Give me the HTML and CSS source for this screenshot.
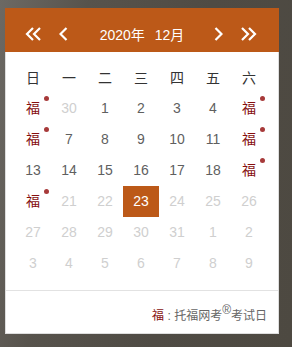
FILE: index.html
```html
<!DOCTYPE html>
<html lang="zh-CN">

<head>
    <meta charset="UTF-8">
    <title>考试日历</title>
    <link rel="stylesheet" href="styles.css">
</head>

<body>
    <div class="calendar">
        <div class="cal-head">
            <svg class="arrow-dbl" width="17" height="14" viewBox="0 0 17 14">
                <polyline points="8,1 2,7 8,13" />
                <polyline points="15,1 9,7 15,13" />
            </svg>
            <svg class="arrow-one prev" width="9" height="14" viewBox="0 0 9 14">
                <polyline points="7.5,1 1.5,7 7.5,13" />
            </svg>
            <div class="title"><span>2020年</span><span class="month">12月</span></div>
            <svg class="arrow-one next" width="9" height="14" viewBox="0 0 9 14">
                <polyline points="1.5,1 7.5,7 1.5,13" />
            </svg>
            <svg class="arrow-dbl" width="17" height="14" viewBox="0 0 17 14">
                <polyline points="2,1 8,7 2,13" />
                <polyline points="9,1 15,7 9,13" />
            </svg>
        </div>
        <div class="cal-body">
            <div class="week">
                <span>日</span><span>一</span><span>二</span><span>三</span><span>四</span><span>五</span><span>六</span>
            </div>
            <div class="days">
                <span class="fu">福</span><span class="other">30</span><span>1</span><span>2</span><span>3</span><span>4</span><span class="fu">福</span>
                <span class="fu">福</span><span>7</span><span>8</span><span>9</span><span>10</span><span>11</span><span class="fu">福</span>
                <span>13</span><span>14</span><span>15</span><span>16</span><span>17</span><span>18</span><span class="fu">福</span>
                <span class="fu">福</span><span class="other">21</span><span class="other">22</span><span class="today">23</span><span class="other">24</span><span class="other">25</span><span class="other">26</span>
                <span class="other">27</span><span class="other">28</span><span class="other">29</span><span class="other">30</span><span class="other">31</span><span class="other">1</span><span class="other">2</span>
                <span class="other">3</span><span class="other">4</span><span class="other">5</span><span class="other">6</span><span class="other">7</span><span class="other">8</span><span class="other">9</span>
            </div>
            <div class="cal-foot">
                <span class="fu-mark">福</span> : 托福网考<sup>®</sup>考试日
            </div>
        </div>
    </div>
</body>

</html>
```

FILE: styles.css
```css
body {
    margin: 0;
    height: 347px;
    font-family: "Liberation Sans", "Noto Sans CJK SC", sans-serif;
    background: linear-gradient(100deg, #6c6964 0%, #57534c 25%, #4f4b44 60%, #4d4941 100%);
    overflow: hidden;
}

.calendar {
    width: 274px;
    margin: 8px 0 0 5px;
}

.cal-head {
    display: flex;
    align-items: center;
    height: 44px;
    box-sizing: border-box;
    padding: 7px 22px 0 20px;
    background-color: #bc5918;
    color: #fff;
}

.cal-head svg polyline {
    fill: none;
    stroke: #fff;
    stroke-width: 2.2;
}

.arrow-dbl {
    flex: none;
}

.arrow-one {
    flex: none;
}

.prev {
    margin-left: 17px;
}

.next {
    margin-right: 17px;
}

.title {
    flex: 1;
    text-align: center;
    font-size: 14px;
    padding-left: 2px;
}

.month {
    margin-left: 10px;
}

.cal-body {
    background-color: #fff;
    border: 1px solid #dedede;
    border-top: none;
    padding-top: 11px;
}

.week,
.days {
    display: grid;
    grid-template-columns: repeat(7, 36px);
    padding: 0 11px 0 9px;
}

.week span {
    height: 30px;
    line-height: 30px;
    text-align: center;
    font-size: 14px;
    color: #333;
}

.days span {
    position: relative;
    height: 31px;
    line-height: 31px;
    text-align: center;
    font-size: 14px;
    color: #5f5f5f;
}

.days .other {
    color: #cfcfcf;
}

.days .fu {
    color: #860f0f;
}

.days .fu::after {
    content: "";
    position: absolute;
    top: 3px;
    right: 2px;
    width: 5px;
    height: 5px;
    border-radius: 50%;
    background-color: #a73a3a;
}

.days .today {
    background-color: #bc5918;
    color: #fff;
}

.cal-foot {
    margin-top: 11px;
    border-top: 1px solid #e2e2e2;
    height: 43px;
    box-sizing: border-box;
    padding: 17px 11px 0 0;
    text-align: right;
    font-size: 12px;
    line-height: 16px;
    color: #666;
}

.cal-foot sup {
    font-size: 12px;
    line-height: 0;
    vertical-align: 6px;
}

.fu-mark {
    color: #860f0f;
}
```
